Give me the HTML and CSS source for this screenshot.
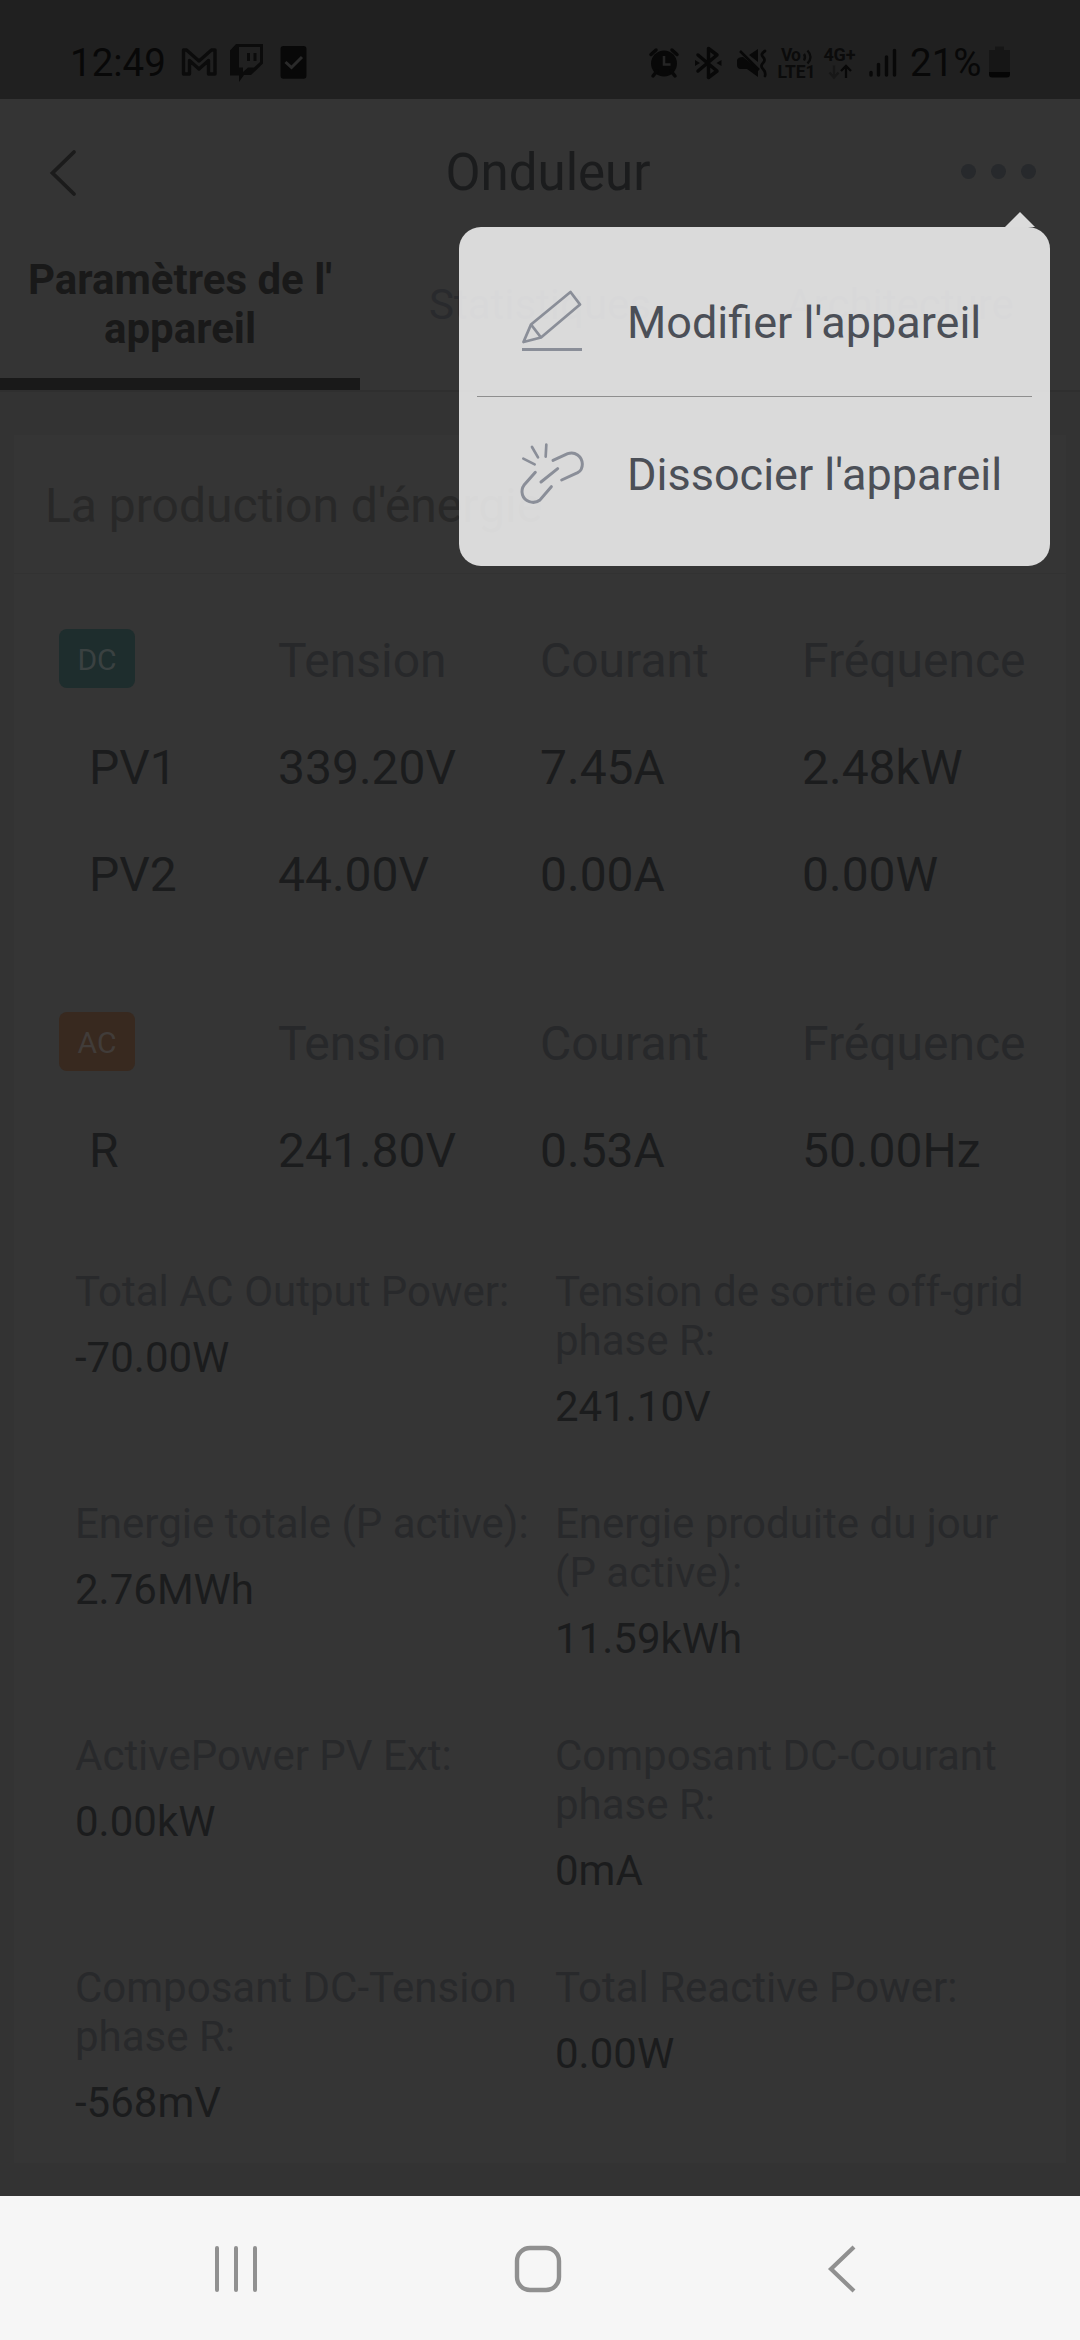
FILE: index.html
```html
<!DOCTYPE html>
<html lang="fr">
<head>
  <meta charset="utf-8">
  <meta name="viewport" content="width=device-width,initial-scale=1.0" />
  <title>Onduleur</title>
  <link rel="stylesheet" href="styles.css">
</head>
<body>
  <div class="status-bar">
    <span class="status-time">12:49</span>
    <svg class="icon-mail" width="40" height="40" viewBox="179 43 40 40">
      <path d="M183.500 74V50h3L199 61l12.500-11h3.500V74h-6.500V60.500L199 69l-9.500-8.500V74z" fill="none" stroke="#0b0b0b" stroke-width="3.400" stroke-linejoin="round"/>
    </svg>
    <svg class="icon-twitch" width="38" height="40" viewBox="227 43 38 40">
      <path d="M236 44h27v19.500L251 75l-7 0-5 7v-6.500h-9V50.500z" fill="#0b0b0b"/>
      <path d="M239 47h21v15l-6 5.500h-6l-5 4.500v-4.500h-4z" fill="#202020"/>
      <path d="M248.500 53v8M255 53v8" stroke="#0b0b0b" stroke-width="3"/>
    </svg>
    <svg class="icon-task" width="30" height="40" viewBox="279 43 30 40">
      <rect x="280.500" y="46" width="26" height="32.700" rx="3" fill="#080808"/>
      <path d="M285.500 62l6 5.500 10.500-10.500" fill="none" stroke="#2a2a2a" stroke-width="3"/>
    </svg>
    <div class="status-right">
      <svg class="icon-alarm" width="34" height="40" viewBox="645 43 34 40">
        <circle cx="662" cy="63.500" r="13" fill="#080808"/>
        <path d="M649 54.500l5-4.500M675 54.500l-5-4.500M655 71l-4 5M669 71l4 5" stroke="#080808" stroke-width="3.500" stroke-linecap="round"/>
        <path d="M662 56v8.500h6.500" fill="none" stroke="#252525" stroke-width="2.500"/>
      </svg>
      <svg width="44" height="40" viewBox="684 43 44 40">
        <path d="M696 55l19 16-8.500 6.500v-29L715 55l-19 16" fill="none" stroke="#080808" stroke-width="3.500" stroke-linejoin="round" stroke-linecap="round"/>
        <path d="M693 60l5 3-5 3zM719.500 60l-5 3 5 3z" fill="#080808"/>
      </svg>
      <svg width="44" height="40" viewBox="728 43 44 40">
        <path d="M747 55l9-6v13zM735 60q1-3 6-3l15 12v8l-11-8h-7q-3-1-3-4z" fill="#080808"/>
        <path d="M738 51l19 19" stroke="#080808" stroke-width="2.500"/>
        <path d="M763 51q-5 3-2 6t0 6 0 6 2 7" fill="none" stroke="#080808" stroke-width="2.700" stroke-linecap="round"/>
      </svg>
      <svg width="46" height="40" viewBox="774 43 46 40">
        <text class="net" x="781" y="61" font-size="17.500" textLength="20">Vo</text>
        <path d="M804 54q2 3 0 6.500M807.500 50.500q6 6.500 0 13" fill="none" stroke="#0b0b0b" stroke-width="2.300"/>
        <text class="net" x="777.500" y="78" font-size="17.500" textLength="38">LTE1</text>
      </svg>
      <svg width="42" height="40" viewBox="820 43 42 40">
        <text class="net" x="823.500" y="61" font-size="18" textLength="32">4G+</text>
        <path d="M834 65.500V77M829.500 72.500l4.500 5 4.500-5" fill="none" stroke="#171717" stroke-width="2.300"/>
        <path d="M846 78V66M841 71l5-5 5 5" fill="none" stroke="#080808" stroke-width="2.300"/>
      </svg>
      <svg width="40" height="40" viewBox="862 43 40 40">
        <path d="M871 72.500V75M878.500 64.500V75M886.500 57V75M894.500 50.500V75" stroke="#080808" stroke-width="3.500" stroke-linecap="round"/>
      </svg>
      <span class="status-percent">21%</span>
      <svg width="26" height="40" viewBox="986 43 26 40">
        <path d="M995 46.500h9v3.500h6v22h-21V50h6z" fill="#161616"/>
        <path d="M989 72h21v2.500q0 3-3 3h-15q-3 0-3-3z" fill="#050505"/>
      </svg>
    </div>
  </div>

  <header class="header">
    <svg class="back" width="30" height="50" viewBox="0 0 30 50">
      <path d="M26 4L4.500 25L26 46" fill="none" stroke="#1b1b1b" stroke-width="3.800" stroke-linecap="round"/>
    </svg>
    <h1>Onduleur</h1>
    <div class="more"><i></i><i></i><i></i></div>
  </header>

  <nav class="tabs">
    <div class="tab active">Paramètres de l'<br>appareil</div>
    <div class="tab">Statistiques</div>
    <div class="tab">Architecture</div>
  </nav>

  <main class="card">
    <h2>La production d'énergie</h2>

    <div class="table">
      <div class="row head">
        <div><span class="badge dc">DC</span></div>
        <div>Tension</div><div>Courant</div><div>Fréquence</div>
      </div>
      <div class="row"><div>PV1</div><div>339.20V</div><div>7.45A</div><div>2.48kW</div></div>
      <div class="row"><div>PV2</div><div>44.00V</div><div>0.00A</div><div>0.00W</div></div>
    </div>

    <div class="table">
      <div class="row head">
        <div><span class="badge ac">AC</span></div>
        <div>Tension</div><div>Courant</div><div>Fréquence</div>
      </div>
      <div class="row"><div>R</div><div>241.80V</div><div>0.53A</div><div>50.00Hz</div></div>
    </div>

    <dl class="details">
      <div><dt>Total AC Output Power:</dt><dd>-70.00W</dd></div>
      <div><dt>Tension de sortie off-grid<br>phase R:</dt><dd>241.10V</dd></div>
      <div><dt>Energie totale (P active):</dt><dd>2.76MWh</dd></div>
      <div><dt>Energie produite du jour<br>(P active):</dt><dd>11.59kWh</dd></div>
      <div><dt>ActivePower PV Ext:</dt><dd>0.00kW</dd></div>
      <div><dt>Composant DC-Courant<br>phase R:</dt><dd>0mA</dd></div>
      <div><dt>Composant DC-Tension<br>phase R:</dt><dd>-568mV</dd></div>
      <div><dt>Total Reactive Power:</dt><dd>0.00W</dd></div>
    </dl>
  </main>

  <footer class="nav-bar">
    <svg width="48" height="50" viewBox="0 0 48 50">
      <path d="M5 4v42M24 4v42M43 4v42" stroke="#909090" stroke-width="4" stroke-linecap="round"/>
    </svg>
    <svg class="home" width="50" height="50" viewBox="0 0 50 50">
      <rect x="4" y="4" width="42" height="42" rx="13" fill="none" stroke="#909090" stroke-width="4.400"/>
    </svg>
    <svg width="34" height="50" viewBox="0 0 34 50">
      <path d="M29 3L6 25L29 47" fill="none" stroke="#909090" stroke-width="4.200"/>
    </svg>
  </footer>

  <div class="menu">
    <div class="menu-item edit">
      <svg width="66" height="64" viewBox="0 0 66 64">
        <path d="M4.500 53L12 35.500L51.500 3L61 15.500L22 48.500zM12 35.500L22 48.500" fill="none" stroke="#8a8e98" stroke-width="2.800" stroke-linejoin="round"/>
        <path d="M3 60.500h60" stroke="#8a8e98" stroke-width="3.200"/>
      </svg>
      <span>Modifier l'appareil</span>
    </div>
    <div class="menu-item">
      <svg width="66" height="64" viewBox="28 64 198 192">
        <g fill="none" stroke="#8a8e98" stroke-width="9" stroke-linecap="round">
          <path d="M41 114l34 17M67 79l18 31M110 72l-2 36" stroke-width="8"/>
          <path d="M130 119L174 99C196 91 217 107 218 130Q218 149 204 156L156 178"/>
          <path d="M94 184L144 144"/>
          <path d="M77 155L44 192C30 212 38 236 59 243Q77 249 91 238L125 198"/>
        </g>
      </svg>
      <span>Dissocier l'appareil</span>
    </div>
  </div>
</body>
</html>
```
FILE: styles.css
```css
* {
  box-sizing: border-box;
}

html, body {
  margin: 0;
  padding: 0;
}

body {
  position: relative;
  display: flex;
  flex-direction: column;
  width: 1080px;
  height: 2340px;
  overflow: hidden;
  background: #333333;
  color: #1b1c1d;
  font-family: Roboto, "Noto Sans", sans-serif;
}

svg {
  display: block;
  flex: none;
}

/* status bar */
.status-bar {
  display: flex;
  flex: none;
  height: 99px;
  padding: 43px 68px 0 70px;
  background: #202020;
  color: #080808;
  font-size: 38.5px;
  line-height: 40px;
}

.status-time {
  width: 109px;
}

.icon-twitch {
  margin-left: 8px;
}

.icon-task {
  margin-left: 14px;
}

.icon-alarm {
  margin-right: 5px;
}

.status-right {
  display: flex;
  margin-left: auto;
}

.status-percent {
  width: 77px;
  margin-left: 7px;
  padding-left: 1px;
  white-space: nowrap;
}

.net {
  font-weight: 700;
  fill: #0b0b0b;
}

/* title bar */
.header {
  display: flex;
  flex: none;
  align-items: center;
  justify-content: space-between;
  height: 131px;
  padding: 17px 44px 0 48px;
  background: #343434;
}

.header h1 {
  margin: 0 0 0 29px;
  font-size: 51px;
  font-weight: 400;
  line-height: 60px;
}

.back {
  margin-right: 28px;
}

.more {
  display: flex;
  gap: 15px;
  margin-top: -3px;
}

.more i {
  width: 15px;
  height: 15px;
  border-radius: 50%;
  background: #27292c;
}

.tabs {
  display: flex;
  flex: none;
  height: 162px;
  border-bottom: 2px solid #2f2f2f;
  background: #343434;
  color: #292a2d;
  font-size: 42px;
  line-height: 49px;
  text-align: center;
}

.tab {
  display: flex;
  flex: 1;
  align-items: center;
  justify-content: center;
  border-bottom: 12px solid transparent;
}

.tab.active {
  border-color: #191919;
  color: #191919;
  font-weight: 700;
}

/* data card */
.card {
  flex: none;
  height: 1728px;
  margin: 43px 14px 0;
  background: #353535;
}

.card h2 {
  height: 139px;
  margin: 0;
  padding: 43px 31px 0;
  border-bottom: 1px solid #323232;
  color: #282828;
  font-size: 48px;
  font-weight: 400;
  line-height: 56px;
}

.table {
  padding: 33px 0 0 45px;
  font-size: 48px;
}

.table + .table {
  padding-top: 62px;
}

.row {
  display: grid;
  grid-template-columns: 219px 262px 262px 1fr;
  align-items: center;
  height: 107px;
  line-height: 56px;
}

.row > div:first-child {
  padding-left: 30px;
}

.row.head {
  color: #27282a;
}

.row.head > div:first-child {
  padding: 0 0 4px;
}

.badge {
  display: block;
  width: 76px;
  height: 59px;
  border-radius: 8px;
  color: #3a4141;
  font-size: 30px;
  line-height: 61px;
  text-align: center;
}

.badge.dc {
  background: #1e2d2d;
}

.badge.ac {
  background: #38291f;
  color: #413c39;
}

.details {
  display: grid;
  grid-template-columns: 480px 1fr;
  grid-auto-rows: 232px;
  margin: 63px 0 0 61px;
  font-size: 42px;
  line-height: 49px;
  white-space: nowrap;
}

.details dt {
  color: #28292b;
}

.details dd {
  margin: 17px 0 0;
}

/* system navigation */
.nav-bar {
  display: flex;
  align-items: center;
  justify-content: space-between;
  height: 144px;
  margin-top: auto;
  padding: 2px 221px 0 212px;
  background: #f6f6f6;
}

.nav-bar .home {
  margin-right: 9px;
}

/* popup menu */
.menu {
  position: absolute;
  top: 227px;
  left: 459px;
  width: 591px;
  height: 339px;
  padding: 19px 18px 15px;
  border-radius: 22px;
  background: rgba(255, 255, 255, 0.82);
}

.menu::before {
  content: "";
  position: absolute;
  top: -15px;
  right: 15px;
  border: 15px solid transparent;
  border-top: 0;
  border-bottom-color: #dbdbdb;
}

.menu-item {
  display: flex;
  align-items: center;
  height: 154px;
  padding-left: 42px;
  color: #4b4f57;
  font-size: 45px;
  line-height: 53px;
  white-space: nowrap;
}

.menu-item.edit {
  height: 151px;
  border-bottom: 1px solid #8e8e8e;
}

.menu-item span {
  margin-left: 42px;
}

.menu-item.edit span {
  padding-top: 2px;
}
```
